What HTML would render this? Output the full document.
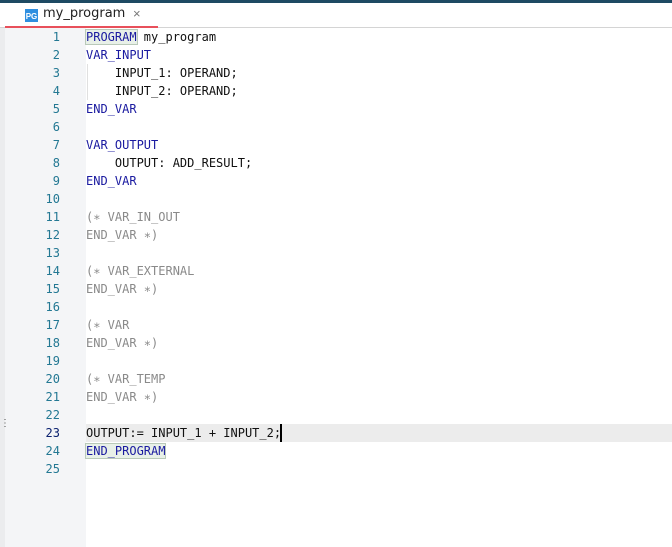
<!DOCTYPE html>
<html><head><style>
body{margin:0;width:672px;height:547px;overflow:hidden;background:#fff;font-family:"DejaVu Sans Mono","Liberation Mono",monospace;position:relative}
.top{position:absolute;left:0;top:0;width:672px;height:3px;background:#1e4a63}
.tabbar{position:absolute;left:0;top:3px;width:672px;height:24px;border-bottom:1px solid #d4d4d4;background:#fff}
.tab{position:absolute;left:5px;top:0;width:153px;height:25px;border-bottom:2px solid #e8505b;box-sizing:border-box;background:#fff}
.icon{position:absolute;left:25px;top:6px;width:13px;height:13px;background:#2f8fe0;color:#fff;font:bold 8px "Liberation Sans",sans-serif;line-height:16px;text-align:center}
.tname{position:absolute;left:43px;top:3px;font:13px "DejaVu Sans","Liberation Sans",sans-serif;color:#222}
.x{position:absolute;left:133px;top:3px;font:13px "Liberation Sans",sans-serif;color:#777}
.gutter{position:absolute;left:0;top:28px;width:86px;height:519px;background:#f4f5f7}
.gstrip{position:absolute;left:0;top:28px;width:5px;height:519px;background:#ebecee}
.hl{position:absolute;left:86px;top:424px;width:586px;height:18px;background:#ececec}
.ln{position:absolute;left:0;width:60px;text-align:right;font-size:12px;line-height:18px;color:#237893}
.code{position:absolute;left:86px;font-size:12px;line-height:18px;white-space:pre;color:#111}
.k{color:#1a1aa0}
.c{color:#8a8a8a}
.box{outline:1px solid #b9c9b9;background:#e8f0e8}
.guide{position:absolute;left:87px;top:64px;width:1px;height:36px;background:#e0e0e0}
.cursor{position:absolute;left:280px;top:424px;width:2px;height:18px;background:#000}
.dots{position:absolute;left:0;top:418px;font:10px "Liberation Sans",sans-serif;color:#555}
</style></head><body>
<div class="top"></div>
<div class="tabbar"><div class="tab"></div><div class="icon">PG</div><div class="tname">my_program</div><div class="x">×</div></div>
<div class="gutter"></div><div class="gstrip"></div>
<div class="hl"></div>
<div class="guide"></div>
<div class="dots">⋮</div>
<div class="ln" style="top:28px">1</div><div class="ln" style="top:46px">2</div><div class="ln" style="top:64px">3</div><div class="ln" style="top:82px">4</div><div class="ln" style="top:100px">5</div><div class="ln" style="top:118px">6</div><div class="ln" style="top:136px">7</div><div class="ln" style="top:154px">8</div><div class="ln" style="top:172px">9</div><div class="ln" style="top:190px">10</div><div class="ln" style="top:208px">11</div><div class="ln" style="top:226px">12</div><div class="ln" style="top:244px">13</div><div class="ln" style="top:262px">14</div><div class="ln" style="top:280px">15</div><div class="ln" style="top:298px">16</div><div class="ln" style="top:316px">17</div><div class="ln" style="top:334px">18</div><div class="ln" style="top:352px">19</div><div class="ln" style="top:370px">20</div><div class="ln" style="top:388px">21</div><div class="ln" style="top:406px">22</div><div class="ln" style="top:424px;color:#0b216f">23</div><div class="ln" style="top:442px">24</div><div class="ln" style="top:460px">25</div>
<div class="code" style="top:28px"><span class="k box">PROGRAM</span> my_program
<span class="k">VAR_INPUT</span>
    INPUT_1: OPERAND;
    INPUT_2: OPERAND;
<span class="k">END_VAR</span>

<span class="k">VAR_OUTPUT</span>
    OUTPUT: ADD_RESULT;
<span class="k">END_VAR</span>

<span class="c">(∗ VAR_IN_OUT</span>
<span class="c">END_VAR ∗)</span>

<span class="c">(∗ VAR_EXTERNAL</span>
<span class="c">END_VAR ∗)</span>

<span class="c">(∗ VAR</span>
<span class="c">END_VAR ∗)</span>

<span class="c">(∗ VAR_TEMP</span>
<span class="c">END_VAR ∗)</span>

OUTPUT:= INPUT_1 + INPUT_2;
<span class="k box">END_PROGRAM</span>
</div>
<div class="cursor"></div>
</body></html>
